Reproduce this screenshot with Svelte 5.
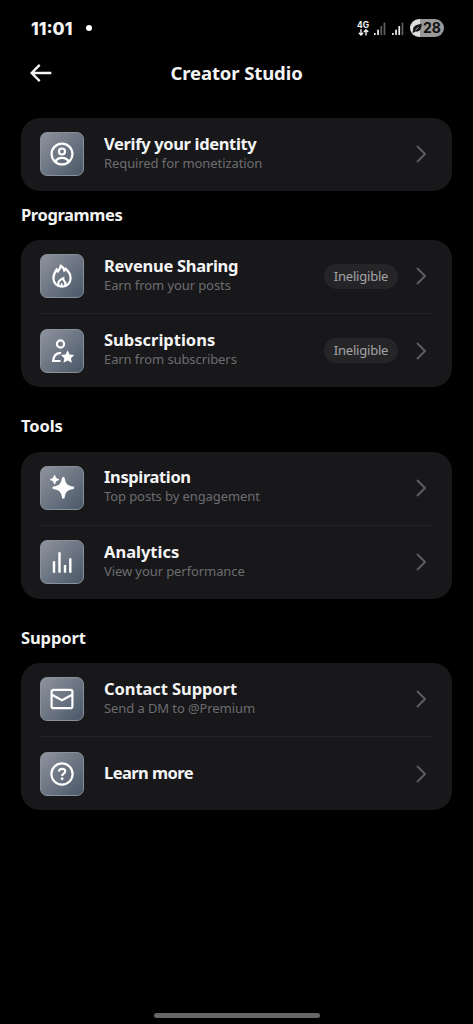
<script lang="ts">
  type Item = {
    icon: string;
    title: string;
    subtitle?: string;
    badge?: string;
    tracking: number;
  };

  type Section = { heading?: string; items: Item[] };

  const sections: Section[] = [
    {
      items: [{ icon: 'identity', title: 'Verify your identity', subtitle: 'Required for monetization', tracking: -0.35 }]
    },
    {
      heading: 'Programmes',
      items: [
        { icon: 'flame', title: 'Revenue Sharing', subtitle: 'Earn from your posts', badge: 'Ineligible', tracking: -0.28 },
        { icon: 'subscriber', title: 'Subscriptions', subtitle: 'Earn from subscribers', badge: 'Ineligible', tracking: 0 }
      ]
    },
    {
      heading: 'Tools',
      items: [
        { icon: 'sparkle', title: 'Inspiration', subtitle: 'Top posts by engagement', tracking: -0.38 },
        { icon: 'chart', title: 'Analytics', subtitle: 'View your performance', tracking: 0 }
      ]
    },
    {
      heading: 'Support',
      items: [
        { icon: 'mail', title: 'Contact Support', subtitle: 'Send a DM to @Premium', tracking: -0.08 },
        { icon: 'help', title: 'Learn more', tracking: -0.57 }
      ]
    }
  ];
</script>

{#snippet glyph(name: string)}
  <svg class="glyph" viewBox="0 0 24 24" fill="none" stroke="currentColor" stroke-width="2.2">
    {#if name === 'identity'}
      <circle cx="12" cy="12" r="10.4" />
      <circle cx="12" cy="9.5" r="3" />
      <path d="M5.4 19.4c1.4-2.4 3.7-3.500 6.600-3.500s5.200 1.100 6.600 3.500" />
    {:else if name === 'flame'}
      <path d="M7.800 7.400c1.500-1.500 2.600-3.300 3-5.600 1.900.9 3 2.600 3.500 4.700.6-.4 1.100-1 1.400-1.700 2.900 2.500 4.900 5.700 4.900 9.200 0 5-3.600 8.700-8.600 8.700s-8.600-3.700-8.600-8.700c0-3.300 1.500-6 3.300-8.500.300.600.700 1.200 1.100 1.900z" />
      <path d="M8.600 21.700c-1.300-3.400.6-5.700 4.600-7.500-.2 1.400.2 2 1 2.800 1.400 1.400 1.700 3 .8 4.700" />
      <path d="M11.700 22.400c-.6-1.200-.3-2.100.5-3" stroke-width="1.700" />
    {:else if name === 'subscriber'}
      <circle cx="10.500" cy="5" r="3.600" />
      <path d="M10.500 22H3.100c.4-5.100 3.200-8.200 8-8.200" />
      <path fill="currentColor" stroke="none" d="m17.600 11.200 2 4.200 4.600.6-3.300 3.200.8 4.600-4.100-2.200-4.100 2.200.8-4.600-3.300-3.200 4.600-.6z" />
    {:else if name === 'sparkle'}
      <path fill="currentColor" stroke="none" d="M12 1.800c.2-1.100 2.400-1.100 2.600 0 .9 5.800 2.500 7.900 8.700 8.800 1.200.2 1.200 2.200 0 2.400-6.200.9-7.800 3-8.700 8.800-.2 1.200-2.400 1.200-2.600 0-.9-5.800-2.500-7.900-8.700-8.800-1.200-.2-1.200-2.200 0-2.400C9.500 9.700 11.100 7.600 12 1.800z" />
      <path fill="currentColor" stroke="none" d="M3.900-.4c.1-.8 1.300-.8 1.400 0 .4 2.300 1 2.900 3.300 3.300.7.1.7 1.200 0 1.300-2.300.4-2.900 1.100-3.300 3.400-.1.700-1.300.7-1.400 0C3.500 5.300 2.900 4.600.6 4.200c-.7-.1-.7-1.200 0-1.300C2.900 2.500 3.500 1.900 3.900-.4z" />
    {:else if name === 'chart'}
      <path d="M4 11.300v11.400M9.500 2.300v20.400M15 15v7.700M20.300 8.300v14.400" stroke-width="2.400" />
    {:else if name === 'mail'}
      <rect x="1.600" y="2.800" width="20.800" height="18.400" rx="2" />
      <path d="m1.800 7.800 10.200 5.400 10.200-5.400" />
    {:else}
      <circle cx="12" cy="12" r="10.600" />
      <path d="M8.900 9.500c.2-1.800 1.400-2.700 3.200-2.700 1.900 0 3.100 1 3.100 2.500 0 2.300-3 2.300-3 4.600" />
      <circle cx="12.100" cy="16.800" r="1.450" fill="currentColor" stroke="none" />
    {/if}
  </svg>
{/snippet}

{#snippet signal(active: number)}
  <svg class="signal" viewBox="0 0 12 13">
    {#each [2, 5.5, 9, 12.5] as h, i}
      <rect x={i * 3.2} y={13 - h} width="1.700" height={h} rx=".5" fill={i < active ? '#f0f0f0' : '#606060'} />
    {/each}
  </svg>
{/snippet}

<div class="screen">
  <div class="status">
    <span class="time">11:01</span>
    <span class="dot"></span>
    <div class="indicators">
      <div class="network">
        <span>4G</span>
        <svg viewBox="0 0 11 7" fill="none" stroke="currentColor" stroke-width="1.400">
          <path d="M3 .2v5.600M.8 3.700 3 5.900l2.200-2.200M8 6.600V1M5.800 3.100 8 .9l2.200 2.200" />
        </svg>
      </div>
      {@render signal(2)}
      {@render signal(3)}
      <div class="battery">
        <svg viewBox="0 0 10 10">
          <path d="M.3 9.300 1.300 7.600C.3 4 3.300 1.500 9.600.7c.2 5.500-2.200 8.500-6.400 7.800L1.500 9.800z" fill="#111" />
          <path d="M3.500 6.900 6.500 4.500" stroke="#ddd" stroke-width=".8" />
        </svg>
        <span>28</span>
      </div>
    </div>
  </div>

  <header>
    <button class="back" aria-label="Back">
      <svg viewBox="0 0 22 18" fill="none" stroke="currentColor" stroke-width="2.400">
        <path d="M21.300 9H2M9.700.9 1.700 9l8 8.100" />
      </svg>
    </button>
    <h1>Creator Studio</h1>
  </header>

  <main>
    {#each sections as section}
      <section>
        {#if section.heading}
          <h2>{section.heading}</h2>
        {/if}
        <div class="card">
          {#each section.items as item}
            <div class="row">
              <div class="tile">{@render glyph(item.icon)}</div>
              <div class="label">
                <span class="title" style={`letter-spacing:${item.tracking}px`}>{item.title}</span>
                {#if item.subtitle}
                  <span class="subtitle">{item.subtitle}</span>
                {/if}
              </div>
              {#if item.badge}
                <span class="badge">{item.badge}</span>
              {/if}
              <svg class="chevron" viewBox="0 0 10 18" fill="none" stroke="currentColor" stroke-width="2">
                <path d="M1 1l8 8-8 8" />
              </svg>
            </div>
          {/each}
        </div>
      </section>
    {/each}
  </main>

  <div class="home-bar"></div>
</div>

<style>
  :global(body) {
    background: #000;
  }

  .screen {
    box-sizing: border-box;
    display: flex;
    flex-direction: column;
    height: 1024px;
    overflow: hidden;
    background: #000;
    color: #f4f4f5;
    font-family: 'Noto Sans', 'Open Sans', sans-serif;
  }

  .status {
    display: flex;
    align-items: center;
    height: 56px;
    padding: 0 29px 0 31px;
  }

  .time {
    font-family: Inter, sans-serif;
    font-size: 17.500px;
    font-weight: 800;
  }

  .dot {
    width: 6px;
    height: 6px;
    margin-left: 14px;
    border-radius: 50%;
    background: #fff;
  }

  .indicators {
    display: flex;
    align-items: center;
    margin-left: auto;
  }

  .network {
    display: flex;
    flex-direction: column;
    align-items: center;
    width: 12px;
    margin-right: 5px;
    font: 700 8.500px/8px Inter, sans-serif;
  }

  .network svg {
    width: 11px;
    height: 7px;
  }

  .signal {
    width: 12px;
    height: 13px;
    margin-right: 6px;
  }

  .battery {
    display: flex;
    align-items: center;
    box-sizing: border-box;
    width: 34px;
    height: 18px;
    padding-left: 2px;
    border-radius: 9px;
    background: linear-gradient(90deg, #ddd 28%, #999 28%);
    color: #111;
    font: 700 14px/18px Inter, sans-serif;
  }

  .battery svg {
    width: 10px;
    height: 10px;
    margin-right: 1px;
  }

  header {
    display: grid;
    grid-template-columns: 60px 1fr 60px;
    align-items: center;
    height: 34px;
  }

  .back {
    width: 22px;
    height: 18px;
    margin-left: 30px;
    padding: 0;
    border: 0;
    background: none;
    color: inherit;
  }

  .back svg {
    display: block;
    width: 22px;
    height: 18px;
  }

  h1 {
    margin: 0;
    text-align: center;
    font-size: 18.500px;
    font-weight: 700;
    letter-spacing: -0.1px;
    line-height: 24px;
  }

  main {
    padding: 28px 21px 0;
  }

  h2 {
    height: 49px;
    margin: 0;
    font-size: 16.500px;
    font-weight: 700;
    letter-spacing: -0.4px;
    line-height: 47px;
  }

  section:nth-child(n + 3) {
    padding-top: 15px;
  }

  section:nth-child(n + 3) h2 {
    height: 49.500px;
    letter-spacing: -0.1px;
  }

  .card {
    border-radius: 19px;
    background: #18181a;
  }

  .row {
    position: relative;
    display: flex;
    align-items: center;
    box-sizing: border-box;
    height: 73px;
    padding: 0 26px 1px 19px;
  }

  .row + .row {
    height: 74px;
    padding-top: 1px;
    padding-bottom: 0;
  }

  .row + .row::before {
    content: '';
    position: absolute;
    top: 0;
    left: 19px;
    right: 20px;
    height: 1px;
    background: #242427;
  }

  .tile {
    display: grid;
    place-items: center;
    box-sizing: border-box;
    width: 44px;
    height: 44px;
    border: 1px solid #88909a;
    border-radius: 7px;
    background: linear-gradient(135deg, #8e939e, #4b5868);
    color: #fff;
  }

  .glyph {
    width: 24px;
    height: 24px;
    overflow: visible;
  }

  .label {
    display: flex;
    flex: 1;
    flex-direction: column;
    margin-left: 20px;
    padding-bottom: 1.400px;
    white-space: nowrap;
  }

  .title {
    font-size: 16.500px;
    font-weight: 700;
    line-height: 20px;
  }

  .subtitle {
    color: #6c6c70;
    font-size: 13px;
    letter-spacing: -0.09px;
    line-height: 19px;
  }

  .badge {
    width: 74px;
    height: 25px;
    margin-right: 18px;
    border-radius: 13px;
    background: #252527;
    color: #a4a4a8;
    font-size: 13px;
    letter-spacing: -0.2px;
    line-height: 24px;
    text-align: center;
  }

  .chevron {
    width: 10px;
    height: 18px;
    color: #5c5c60;
  }

  .home-bar {
    width: 166px;
    height: 5px;
    margin: auto auto 6px;
    border-radius: 3px;
    background: #666;
  }
</style>
